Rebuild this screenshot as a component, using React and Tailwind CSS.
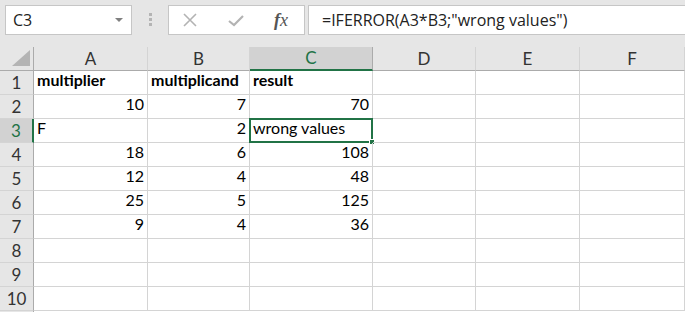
import React from "react";

const cols = [
  { key: "A", w: "w-[114px]" },
  { key: "B", w: "w-[102px]" },
  { key: "C", w: "w-[123px]" },
  { key: "D", w: "w-[103px]" },
  { key: "E", w: "w-[104px]" },
  { key: "F", w: "w-[105px]" },
];

const data = [
  [{ v: "multiplier", b: true }, { v: "multiplicand", b: true }, { v: "result", b: true }],
  [{ v: "10", r: true }, { v: "7", r: true }, { v: "70", r: true }],
  [{ v: "F" }, { v: "2", r: true }, { v: "wrong values" }],
  [{ v: "18", r: true }, { v: "6", r: true }, { v: "108", r: true }],
  [{ v: "12", r: true }, { v: "4", r: true }, { v: "48", r: true }],
  [{ v: "25", r: true }, { v: "5", r: true }, { v: "125", r: true }],
  [{ v: "9", r: true }, { v: "4", r: true }, { v: "36", r: true }],
  [],
  [],
  [],
];

const cellFont = { fontFamily: "Lato, 'Liberation Sans', sans-serif" };

function Toolbar() {
  return (
    <div className="flex items-start h-[47px] bg-[#e6e6e6] pt-[5px] pl-[5px]">
      <div className="flex items-center justify-between w-[127px] h-[30px] bg-white border border-[#c6c6c6] pl-[7px] pr-[8px]">
        <span className="text-[16px] text-[#222]" style={{ fontFamily: "'Open Sans', sans-serif" }}>C3</span>
        <svg width="8" height="5" viewBox="0 0 8 5">
          <path d="M0 0 L8 0 L4 4 Z" fill="#808080" />
        </svg>
      </div>
      <div className="flex flex-col gap-[2px] ml-[17px] mt-[8px]">
        <div className="w-[3px] h-[3px] bg-[#b4b4b4]" />
        <div className="w-[3px] h-[3px] bg-[#b4b4b4]" />
        <div className="w-[3px] h-[3px] bg-[#b4b4b4]" />
      </div>
      <div className="flex items-center w-[137px] h-[30px] ml-[16px] bg-white border border-[#c6c6c6]">
        <svg width="14" height="14" viewBox="0 0 14 14" className="ml-[14px]">
          <path d="M1 1 L13 13 M13 1 L1 13" stroke="#b3b3b3" strokeWidth="1.6" />
        </svg>
        <svg width="16" height="13" viewBox="0 0 16 13" className="ml-[31px]">
          <path d="M1 7 L6 11 L15 2" stroke="#b3b3b3" strokeWidth="2.2" fill="none" />
        </svg>
        <span
          className="ml-[30px] text-[18px] italic text-[#555]"
          style={{ fontFamily: "'Liberation Serif', serif" }}
        >
          <span className="font-bold">f</span>x
        </span>
      </div>
      <div className="flex items-center flex-1 h-[30px] ml-[3px] bg-white border border-[#c6c6c6] border-r-0 pl-[13px]">
        <span className="text-[16px] text-[#222]" style={{ fontFamily: "'Open Sans', sans-serif" }}>
          =IFERROR(A3*B3;"wrong values")
        </span>
      </div>
    </div>
  );
}

function HeaderRow() {
  return (
    <div className="flex h-[24px] bg-[#e6e6e6]">
      <div className="relative w-[34px] h-[24px] border-r border-b border-[#ababab]">
        <svg width="18" height="16" viewBox="0 0 18 16" className="absolute right-[3px] bottom-[4px]">
          <path d="M18 0 L18 16 L0 16 Z" fill="#b4b4b4" />
        </svg>
      </div>
      {cols.map((c) => {
        const sel = c.key === "C";
        return (
          <div
            key={c.key}
            className={`${c.w} h-[24px] flex items-center justify-center text-[17px] border-r ${
              sel
                ? "bg-[#d2d2d2] text-[#217346] border-b-2 border-b-[#217346] border-r-[#ababab]"
                : "text-[#333] border-b border-b-[#ababab] border-r-[#d4d4d4]"
            }`}
            style={cellFont}
          >
            {c.key}
          </div>
        );
      })}
    </div>
  );
}

function Row({ n, cells }) {
  const sel = n === 3;
  return (
    <div className="flex h-[24px]">
      <div
        className={`w-[34px] h-[24px] flex items-center justify-center text-[17px] border-b border-b-[#d4d4d4] ${
          sel
            ? "bg-[#d2d2d2] text-[#217346] border-r-2 border-r-[#217346]"
            : "bg-[#e6e6e6] text-[#333] border-r border-r-[#ababab]"
        }`}
        style={cellFont}
      >
        {n}
      </div>
      {cols.map((c, i) => {
        const cell = cells[i];
        const active = sel && c.key === "C";
        return (
          <div
            key={c.key}
            className={`relative ${c.w} h-[24px] flex items-end pb-[2px] px-[3px] text-[16px] text-black border-r border-b border-[#d4d4d4] ${
              cell && cell.r ? "justify-end" : "justify-start"
            } ${cell && cell.b ? "font-bold" : ""}`}
            style={cellFont}
          >
            {cell ? cell.v : ""}
            {active && (
              <>
                <div className="absolute -left-[1px] -top-[1px] -right-[1px] -bottom-[1px] border-2 border-[#217346]" />
                <div className="absolute -right-[3px] -bottom-[3px] w-[6px] h-[6px] bg-[#217346] border border-white" />
              </>
            )}
          </div>
        );
      })}
    </div>
  );
}

export default function App() {
  return (
    <div className="w-[685px] h-[312px] overflow-hidden bg-white">
      <Toolbar />
      <HeaderRow />
      {data.map((cells, i) => (
        <Row key={i} n={i + 1} cells={cells} />
      ))}
      <div className="flex h-[2px]">
        <div className="w-[34px] bg-[#e6e6e6] border-r border-[#ababab]" />
      </div>
    </div>
  );
}
